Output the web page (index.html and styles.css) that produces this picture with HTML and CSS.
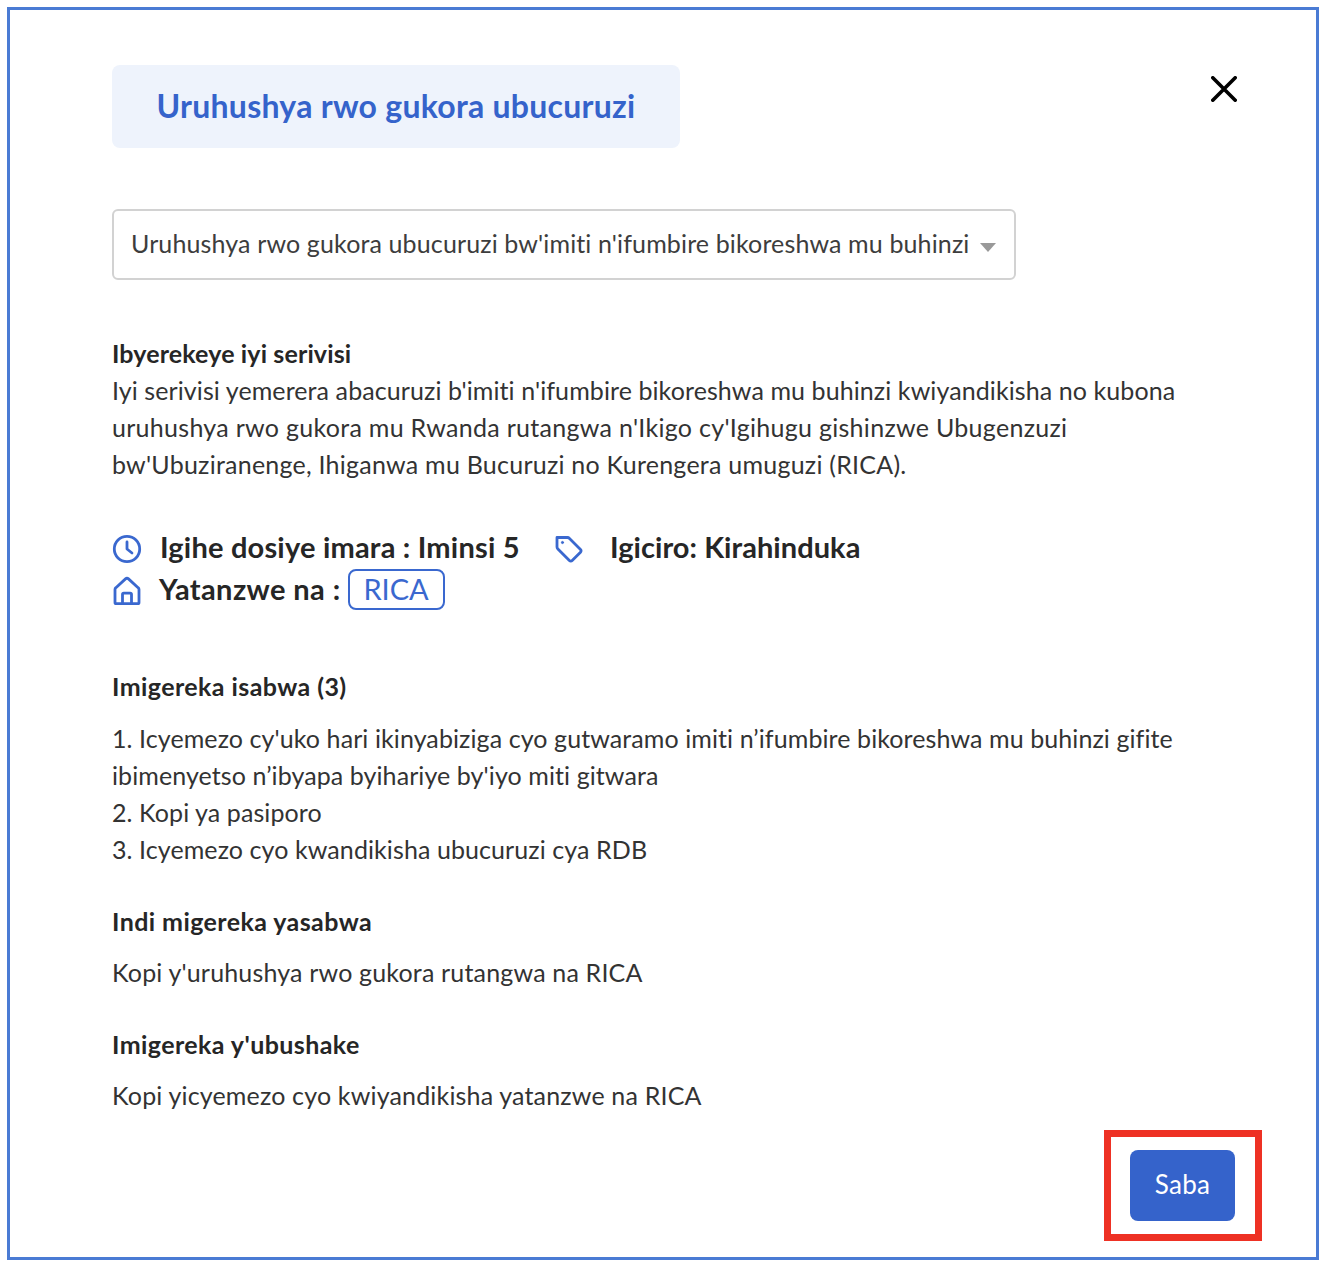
FILE: index.html
```html
<!DOCTYPE html>
<html lang="rw">
<head>
<meta charset="utf-8">
<title>Uruhushya rwo gukora ubucuruzi</title>
<link rel="stylesheet" href="styles.css">
</head>
<body>
<main class="frame">
  <header class="head">
    <h1 class="title">Uruhushya rwo gukora ubucuruzi</h1>
    <svg class="close" viewBox="0 0 26 26" aria-label="close"><path d="M1.800 1.800 24.200 24.200M24.200 1.800 1.800 24.200"/></svg>
  </header>
  <div class="select">
    <span>Uruhushya rwo gukora ubucuruzi bw'imiti n'ifumbire bikoreshwa mu buhinzi</span>
    <i class="caret"></i>
  </div>
  <section class="about">
    <h2 class="label label-tight">Ibyerekeye iyi serivisi</h2>
    <p class="body-text">Iyi serivisi yemerera abacuruzi b'imiti n'ifumbire bikoreshwa mu buhinzi kwiyandikisha no kubona <span class="line-wide">uruhushya rwo gukora mu Rwanda rutangwa n'Ikigo cy'Igihugu gishinzwe Ubugenzuzi</span> <span class="line-mid">bw'Ubuziranenge, Ihiganwa mu Bucuruzi no Kurengera umuguzi (RICA).</span></p>
  </section>
  <section class="facts">
    <div class="fact-row">
      <svg class="icon" viewBox="0 0 30 30"><circle cx="15" cy="15" r="12.700"/><path d="M15 8v7l5 4"/></svg>
      <span class="fact fact-time">Igihe dosiye imara : Iminsi 5</span>
      <svg class="icon tag" viewBox="0 0 30 30"><path d="M3 3.500h10.500c.8 0 1.400.3 2 .9l11 11c.8.8.8 2 0 2.800l-8.300 8.300c-.8.8-2 .8-2.800 0l-11.500-11.500c-.6-.6-.9-1.200-.9-2V3.500z"/><circle class="dot" cx="8.500" cy="8.500" r="1.100"/></svg>
      <span class="fact fact-price">Igiciro: Kirahinduka</span>
    </div>
    <div class="fact-row second">
      <svg class="icon" viewBox="0 0 30 30"><path d="M3 26.500c0 .8.4 1.200 1.200 1.200h21.600c.8 0 1.200-.4 1.200-1.200V13.500c0-.8-.3-1.300-.9-1.800L16.500 2.900c-.9-.8-2.100-.8-3 0L3.900 11.700c-.6.500-.9 1-.9 1.800z"/><path d="M10.500 27.500V18.500c0-.8.5-1.300 1.300-1.300h6.400c.8 0 1.300.5 1.300 1.300v9"/></svg>
      <span class="fact fact-by">Yatanzwe na :</span>
      <span class="chip">RICA</span>
    </div>
  </section>
  <section class="docs">
    <h2 class="label">Imigereka isabwa (3)</h2>
    <ol class="doc-list">
      <li>1. Icyemezo cy'uko hari ikinyabiziga cyo gutwaramo imiti n’ifumbire bikoreshwa mu buhinzi gifite ibimenyetso n’ibyapa byihariye by'iyo miti gitwara</li>
      <li>2. Kopi ya pasiporo</li>
      <li>3. Icyemezo cyo kwandikisha ubucuruzi cya RDB</li>
    </ol>
  </section>
  <section class="docs more">
    <h2 class="label">Indi migereka yasabwa</h2>
    <p class="body-text">Kopi y'uruhushya rwo gukora rutangwa na RICA</p>
  </section>
  <section class="docs more">
    <h2 class="label">Imigereka y'ubushake</h2>
    <p class="body-text">Kopi yicyemezo cyo kwiyandikisha yatanzwe na RICA</p>
  </section>
  <footer class="foot">
    <button class="apply">Saba</button>
    <div class="highlight"></div>
  </footer>
</main>
</body>
</html>
```
FILE: styles.css
```css
* { box-sizing: border-box; }
html, body { margin: 0; padding: 0; background: #fff; }
body { padding: 7px; font-family: "Lato", "Open Sans", sans-serif; color: #2b2b2b; }
.frame {
  width: 1312px;
  height: 1253px;
  border: 3px solid #4a7bd4;
  padding: 55px 0 0 102px;
  background: #fff;
  position: relative;
}
.head { display: flex; justify-content: space-between; align-items: flex-start; width: 1125px; }
.title {
  margin: 0;
  width: 568px;
  height: 83px;
  padding-bottom: 2px;
  background: #eef3fc;
  border-radius: 8px;
  color: #3563cb;
  font-size: 32px;
  font-weight: 700;
  line-height: 81px;
  text-align: center;
  letter-spacing: .27px;
}
.close { width: 26px; height: 26px; margin-top: 11px; }
.close path { stroke: #000; stroke-width: 3.600; stroke-linecap: round; fill: none; }
.select {
  width: 904px;
  height: 71px;
  margin-top: 61px;
  border: 2px solid #d2d2d2;
  border-radius: 6px;
  padding: 0 18px 4px 17px;
  display: flex;
  align-items: center;
  justify-content: space-between;
  font-size: 25px;
  letter-spacing: .13px;
  color: #3d3d3d;
  white-space: nowrap;
}
.caret { width: 0; height: 0; border: 8px solid transparent; border-top: 9px solid #999; border-bottom: 0; margin-top: 9px; }
.about { margin-top: 55px; }
.label { margin: 0; font-size: 25px; font-weight: 700; line-height: 37px; letter-spacing: .42px; color: #262626; }
.label-tight { letter-spacing: .13px; }
.body-text { margin: 0; font-size: 25px; line-height: 37px; letter-spacing: .09px; color: #333; width: 1080px; }
.line-wide { letter-spacing: .29px; }
.line-mid { letter-spacing: .24px; }
.facts { margin-top: 45px; }
.fact-row { display: flex; align-items: center; height: 42px; }
.fact { font-size: 29px; font-weight: 700; color: #262626; white-space: nowrap; padding-bottom: 6px; }
.icon { width: 30px; height: 30px; flex: none; }
.icon path, .icon circle { fill: none; stroke: #3a68cf; stroke-width: 2.800; stroke-linecap: round; stroke-linejoin: round; }
.icon .dot { fill: #3a68cf; stroke-width: 1; }
.fact-time { margin-left: 18px; width: 394px; letter-spacing: .2px; }
.fact-price { letter-spacing: .05px; }
.fact-by { margin-left: 17px; letter-spacing: .4px; }
.tag { margin-right: 26px; }
.chip {
  margin-left: 7px;
  margin-bottom: 4px;
  height: 41px;
  width: 97px;
  border: 2px solid #3a68cf;
  border-radius: 8px;
  color: #3a68cf;
  font-size: 29px;
  line-height: 36px;
  text-align: center;
}
.docs { margin-top: 56px; }
.doc-list { list-style: none; margin: 15px 0 0; padding: 0; font-size: 25px; line-height: 37px; letter-spacing: .09px; color: #333; width: 1080px; }
.more { margin-top: 35px; }
.more .body-text { margin-top: 14px; letter-spacing: .17px; }
.foot { position: absolute; right: 81px; bottom: 36px; }
.apply {
  display: block;
  width: 105px;
  height: 71px;
  padding: 0 0 4px;
  border: 0;
  border-radius: 8px;
  background: #3563cb;
  color: #fff;
  font-family: inherit;
  font-size: 26px;
  letter-spacing: .3px;
}
.highlight {
  position: absolute;
  left: -26px;
  top: -20px;
  width: 158px;
  height: 111px;
  border: 7px solid #ee3124;
}
```
